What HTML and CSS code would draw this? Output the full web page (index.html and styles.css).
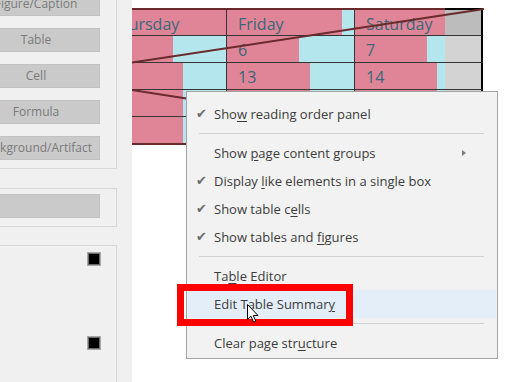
FILE: index.html
```html
<!DOCTYPE html>
<html>
<head>
<meta charset="utf-8">
<link rel="stylesheet" href="styles.css">
</head>
<body>
<div class="screen">
  <aside class="panel">
    <div class="group group-tags">
      <div class="tag-list">
        <div class="tag-btn">Figure/Caption</div>
        <div class="tag-btn">Table</div>
        <div class="tag-btn">Cell</div>
        <div class="tag-btn">Formula</div>
        <div class="tag-btn">Background/Artifact</div>
      </div>
    </div>
    <div class="group group-single">
      <div class="tag-btn"></div>
    </div>
    <div class="group group-checks">
      <div class="swatch"></div>
      <div class="swatch swatch-second"></div>
    </div>
  </aside>

  <main class="page">
    <div class="table-clip">
      <div class="cal">
        <div class="cell head" style="--p:128px"><span class="txt">Thursday</span></div>
        <div class="cell head" style="--p:115px"><span class="txt">Friday</span></div>
        <div class="cell head sat" style="--p:90px"><span class="txt">Saturday</span></div>
        <div class="cell head gray-head"></div>

        <div class="cell" style="--p:74px"><span class="txt">5</span></div>
        <div class="cell" style="--p:72px"><span class="txt">6</span></div>
        <div class="cell sat" style="--p:72px"><span class="txt">7</span></div>
        <div class="cell gray"></div>

        <div class="cell" style="--p:84px"><span class="txt">12</span></div>
        <div class="cell" style="--p:83px"><span class="txt">13</span></div>
        <div class="cell sat" style="--p:82px"><span class="txt">14</span></div>
        <div class="cell gray"></div>

        <div class="cell" style="--p:84px"></div>
        <div class="cell" style="--p:83px"></div>
        <div class="cell sat" style="--p:82px"></div>
        <div class="cell gray"></div>

        <div class="cell last" style="--p:84px"></div>
        <div class="cell last" style="--p:83px"></div>
        <div class="cell last sat" style="--p:82px"></div>
        <div class="cell last gray"></div>
      </div>
    </div>
    <svg class="diag" width="388" height="160" viewBox="0 0 388 160">
      <line x1="0" y1="62.5" x2="352" y2="9" stroke="#6b2a2c" stroke-width="2"/>
      <line x1="0" y1="90" x2="80" y2="102.5" stroke="#6b2a2c" stroke-width="2"/>
    </svg>
  </main>

  <div class="menu">
    <div class="item"><span class="chk">✔</span>Sho<u>w</u> reading order panel</div>
    <div class="sep"></div>
    <div class="item">Show <u>p</u>age content groups<span class="arrow"></span></div>
    <div class="item"><span class="chk">✔</span>Display <u>l</u>ike elements in a single box</div>
    <div class="item"><span class="chk">✔</span>Show table c<u>e</u>lls</div>
    <div class="item"><span class="chk">✔</span>Show tables and <u>f</u>igures</div>
    <div class="sep"></div>
    <div class="item">Ta<u>b</u>le Editor</div>
    <div class="item hover">Edit Table Summar<u>y</u></div>
    <div class="sep"></div>
    <div class="item">Clear page str<u>u</u>cture</div>
  </div>

  <div class="callout"></div>

  <svg class="cursor" width="13" height="20" viewBox="0 0 13 20">
    <path d="M0.5 0.5 L0.5 15.5 L4 12.2 L6.6 18.2 L8.8 17.2 L6.3 11.5 L11 11.5 Z" fill="#fff" stroke="#000" stroke-width="1" stroke-linejoin="miter"/>
  </svg>
</div>
</body>
</html>
```

FILE: styles.css
```css
* { box-sizing: border-box; }
html, body { margin: 0; padding: 0; }
body { width: 520px; height: 382px; overflow: hidden; background: #fff; }

.screen {
  position: relative;
  width: 520px;
  height: 382px;
  display: flex;
  overflow: hidden;
  font-family: "Open Sans", "Noto Sans", sans-serif;
}

/* left panel */
.panel {
  width: 132px;
  flex: none;
  background: #f0f0f0;
  display: flex;
  flex-direction: column;
  overflow: hidden;
}
.group {
  width: 117px;
  border-right: 1px solid #d8d8d8;
}
.group-tags {
  height: 169px;
  border-bottom: 1px solid #d8d8d8;
}
.tag-list {
  margin-top: -8px;
  display: flex;
  flex-direction: column;
  gap: 12px;
}
.tag-btn {
  width: 128px;
  height: 24px;
  margin-left: -28px;
  background: #cacaca;
  border: 1px solid #c2c2c2;
  color: #7a7a7a;
  font-size: 12px;
  line-height: 22px;
  text-align: center;
  white-space: nowrap;
}
.group-single {
  margin-top: 19px;
  border-top: 1px solid #d8d8d8;
  border-bottom: 1px solid #d8d8d8;
  padding: 5px 0 8px;
}
.group-checks {
  margin-top: 18px;
  flex: 1;
  border-top: 1px solid #d8d8d8;
  padding-top: 6px;
}
.swatch {
  width: 14px;
  height: 14px;
  margin-left: 87px;
  border: 1px solid #a8a8a8;
  background: #000;
  box-shadow: inset 0 0 0 1px #6a6a6a;
}
.swatch-second { margin-top: 70px; }

/* page area */
.page {
  position: relative;
  flex: 1;
  background: #fff;
}
.table-clip {
  margin-top: 8px;
  width: 388px;
  overflow: hidden;
}
.cal {
  margin-left: -33px;
  display: grid;
  grid-template-columns: 128px 128px 90px 38px;
  width: 384px;
}
.cell {
  position: relative;
  height: 27px;
  border-bottom: 1px solid #353535;
  border-right: 1px solid #353535;
  background: linear-gradient(to right, #e08598 var(--p), #b3e6ed var(--p));
  font-family: "Open Sans", "Noto Sans", sans-serif;
  font-size: 16px;
  color: #3a6878;
  overflow: hidden;
}
.cell.sat { border-right: none; }
.cell.head {
  height: 28px;
  border-top: 2px solid #6b2a2c;
}
.cell.gray-head {
  background: #bcbcbc;
  border-top: 2px solid #000;
  border-right: 2px solid #000;
}
.cell.gray {
  background: #d3d3d3;
  border-right: 2px solid #000;
}
.cell.last {
  height: 28px;
  border-bottom: 2px solid #6b2a2c;
  box-shadow: 0 1px 0 #b3e6ed;
}
.cell.last.gray { border-bottom: 2px solid #000; }
.txt {
  position: absolute;
  left: 11px;
  top: 2px;
  line-height: 24px;
  white-space: nowrap;
}
.diag {
  position: absolute;
  left: 0;
  top: 0;
}

/* context menu */
.menu {
  position: absolute;
  left: 186px;
  top: 91px;
  width: 312px;
  height: 268px;
  background: #f2f2f2;
  border: 1px solid #a3a3a3;
  padding: 8px 1px 1px;
  font-size: 13px;
  color: #3c3c3c;
}
.item {
  position: relative;
  height: 28px;
  line-height: 28px;
  padding-left: 26px;
  white-space: nowrap;
}
.item u { text-decoration-thickness: 1px; text-underline-offset: 2px; }
.item.hover { background: #e4eef8; }
.chk {
  position: absolute;
  left: 8px;
  top: 0;
  font-size: 13px;
  color: #6c6c6c;
  font-family: "DejaVu Sans", sans-serif;
}
.arrow {
  position: absolute;
  left: 274px;
  top: 11px;
  width: 0;
  height: 0;
  border-top: 3.5px solid transparent;
  border-bottom: 3.5px solid transparent;
  border-left: 4px solid #7c7c7c;
}
.sep {
  height: 11px;
  margin: 0 12px 0 11px;
  background: linear-gradient(#d2d2d2, #d2d2d2) 0 5px / 100% 1px no-repeat;
}

/* annotation */
.callout {
  position: absolute;
  left: 177px;
  top: 284px;
  width: 176px;
  height: 42px;
  border: 7px solid #ff0000;
}
.cursor {
  position: absolute;
  left: 247px;
  top: 304px;
}
```
